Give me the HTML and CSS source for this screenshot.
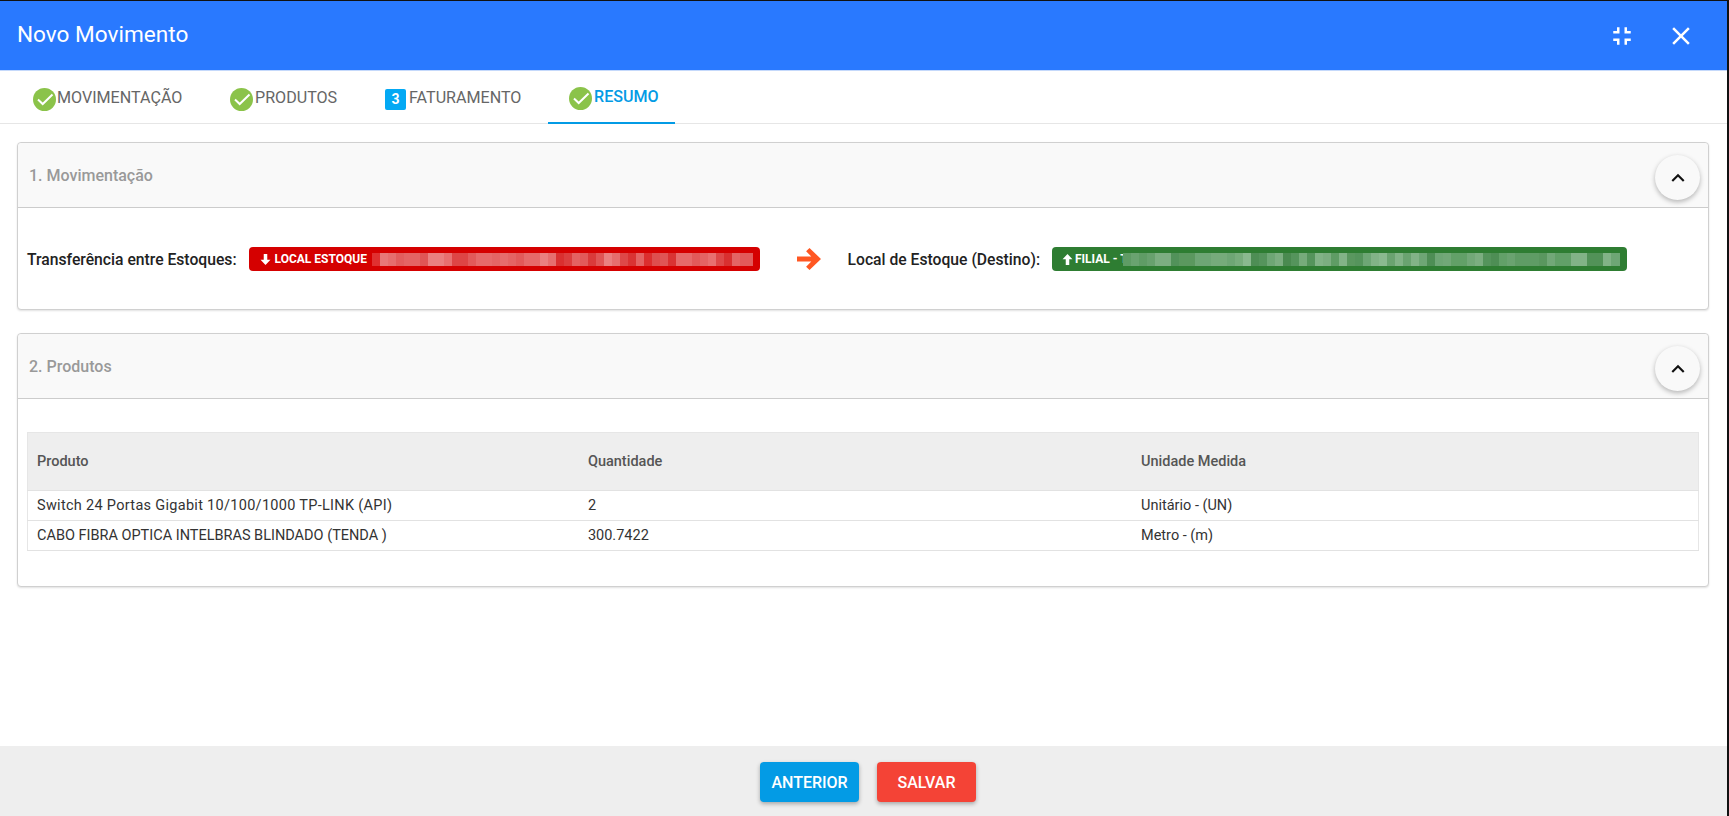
FILE: index.html
```html
<!DOCTYPE html>
<html lang="pt">
<head>
<meta charset="utf-8">
<title>Novo Movimento</title>
<link rel="stylesheet" href="styles.css">
</head>
<body>
<div class="dialog">
  <header class="topbar">
    <h1 class="title">Novo Movimento</h1>
    <div class="top-actions">
      <svg class="icon-top" viewBox="0 0 24 24"><path d="M5 16h3v3h2v-5H5v2zm3-8H5v2h5V5H8v3zm6 11h2v-3h3v-2h-5v5zm2-11V5h-2v5h5V8h-3z"/></svg>
      <svg class="icon-top" viewBox="0 0 24 24"><path d="M19 6.41L17.59 5 12 10.59 6.41 5 5 6.41 10.59 12 5 17.59 6.41 19 12 13.41 17.59 19 19 17.59 13.41 12z"/></svg>
    </div>
  </header>
  <nav class="tabs">
    <div class="tab tab-mov"><svg class="check" viewBox="0 0 23 23"><circle cx="11.5" cy="11.5" r="11.5"/><path d="M5 11.500l4.700 4.500 9.800-9.500"/></svg><span>MOVIMENTAÇÃO</span></div>
    <div class="tab tab-prod"><svg class="check" viewBox="0 0 23 23"><circle cx="11.5" cy="11.5" r="11.5"/><path d="M5 11.500l4.700 4.500 9.800-9.500"/></svg><span>PRODUTOS</span></div>
    <div class="tab tab-fat"><span class="num">3</span><span>FATURAMENTO</span></div>
    <div class="tab tab-res active"><svg class="check" viewBox="0 0 23 23"><circle cx="11.5" cy="11.5" r="11.5"/><path d="M5 11.500l4.700 4.500 9.800-9.500"/></svg><span>RESUMO</span></div>
  </nav>
  <main class="content">
    <section class="card card-mov">
      <div class="card-head"><span class="head-text">1. Movimentação</span>
        <button class="round"><svg viewBox="0 0 24 24"><path d="M12 8l-6 6 1.41 1.41L12 10.83l4.59 4.58L18 14z"/></svg></button>
      </div>
      <div class="mov-body">
        <strong class="lbl">Transferência entre Estoques:</strong>
        <div class="pill pill-red">
          <svg class="pill-arrow" viewBox="0 0 10 10"><path d="M5 10L.5 5.200h2.900V0h3.200v5.200h2.900z"/></svg>
          <span class="pill-text">LOCAL ESTOQUE</span>
          <div class="mosaic m-red"></div>
        </div>
        <svg class="big-arrow" viewBox="0 0 24 22"><path d="M12.5 0l11.5 11-11.5 11-3.4-3.3 5.200-5.200H0V8.500h14.300L9.100 3.300z"/></svg>
        <strong class="lbl lbl-dest">Local de Estoque (Destino):</strong>
        <div class="pill pill-green">
          <svg class="pill-arrow" viewBox="0 0 10 10"><path d="M5 0l4.500 4.800H6.600V10H3.400V4.800H.5z"/></svg>
          <span class="pill-text">FILIAL - T</span>
          <div class="mosaic m-green"></div>
        </div>
      </div>
    </section>
    <section class="card card-prod">
      <div class="card-head"><span class="head-text">2. Produtos</span>
        <button class="round"><svg viewBox="0 0 24 24"><path d="M12 8l-6 6 1.41 1.41L12 10.83l4.59 4.58L18 14z"/></svg></button>
      </div>
      <div class="prod-body">
        <table class="grid">
          <thead><tr><th>Produto</th><th>Quantidade</th><th>Unidade Medida</th></tr></thead>
          <tbody>
            <tr><td class="wide">Switch 24 Portas Gigabit 10/100/1000 TP-LINK (API)</td><td>2</td><td>Unitário - (UN)</td></tr>
            <tr><td>CABO FIBRA OPTICA INTELBRAS BLINDADO (TENDA )</td><td>300.7422</td><td>Metro - (m)</td></tr>
          </tbody>
        </table>
      </div>
    </section>
  </main>
  <footer class="foot">
    <button class="btn btn-blue">ANTERIOR</button>
    <button class="btn btn-red">SALVAR</button>
  </footer>
</div>
</body>
</html>
```
FILE: styles.css
```css
* { box-sizing: border-box; }
html, body { margin: 0; height: 100%; overflow: hidden; }
body { background: #111; font-family: Roboto, "Liberation Sans", sans-serif; color: #222; }
.dialog { display: flex; flex-direction: column; height: 815px; margin: 1px 2px 0 0; background: #fff; }
.topbar { height: 70px; flex: none; background: #2979ff; color: #fff; display: flex; align-items: center; justify-content: space-between; padding: 0 31px 0 17px; border-bottom: 1px solid #c5d9fb; }
.title { margin: 0 0 2px; font-size: 22.6px; font-weight: 400; }
.top-actions { display: flex; gap: 29px; }
.icon-top { width: 30px; height: 30px; fill: #fff; display: block; }
.tabs { height: 53px; flex: none; display: flex; border-bottom: 1px solid #e6e6e6; }
.tab { display: flex; align-items: center; height: 53px; font-size: 16.1px; color: #666; }
.tab-mov { margin-left: 33px; width: 197px; gap: 1px; }
.tab-prod { width: 155px; gap: 2px; }
.tab-fat { width: 163px; gap: 3px; }
.tab-res { width: 127px; padding-left: 21px; gap: 2px; color: #039be5; border-bottom: 2px solid #039be5; font-weight: 500; }
.check { width: 23px; height: 23px; flex: none; margin-top: 3px; }
.check circle { fill: #8bc34a; }
.check path { fill: none; stroke: #fff; stroke-width: 2; }
.num { width: 21px; height: 21px; margin-top: 3px; border-radius: 2px; background: #03a9f4; color: #fff; font-size: 14px; font-weight: 700; display: flex; align-items: center; justify-content: center; }
.content { flex: 1; padding: 18px 18px 0 17px; display: flex; flex-direction: column; gap: 23px; }
.card { border: 1px solid #d0d0d0; border-radius: 4px; box-shadow: 0 1px 2px rgba(0,0,0,.12); background: #fff; }
.card-mov { height: 168px; }
.card-prod { height: 254px; }
.card-head { height: 65px; background: #f9f9f9; border-bottom: 1px solid #ccc; border-radius: 4px 4px 0 0; display: flex; align-items: center; justify-content: space-between; padding: 0 8px 0 11px; font-size: 16px; font-weight: 500; color: #999; }
.head-text { padding-top: 1px; }
.round { width: 45px; height: 45px; border: 0; border-radius: 50%; background: #f9f9f9; padding: 0; margin-top: 5px; box-shadow: 0 2px 5px rgba(0,0,0,.28); display: flex; align-items: center; justify-content: center; }
.round svg { width: 26px; height: 26px; fill: #111; }
.mov-body { display: flex; align-items: center; padding: 39px 0 0 9px; }
.lbl { font-size: 15.7px; font-weight: 500; color: #222; white-space: nowrap; }
.pill { height: 24px; border-radius: 4px; display: flex; align-items: center; color: #fff; font-size: 12px; font-weight: 700; padding: 0 7px 0 11px; flex: none; }
.pill-red { width: 511px; margin-left: 12px; background: #d50000; }
.pill-green { width: 575px; margin-left: 12px; background: #2e7d32; padding-left: 10px; }
.pill-arrow { width: 11px; height: 11px; fill: #fff; flex: none; }
.pill-text { margin-left: 4px; white-space: nowrap; min-width: 0; }
.pill-green .pill-text { margin-left: 2px; }
.mosaic { height: 13px; margin-left: auto; flex: none; position: relative; }
.m-red { width: 381px; background: linear-gradient(90deg, #e03030 0 8px, #e87878 8px 16px, #e66e6e 16px 24px, #e25d5d 24px 32px, #e46464 32px 48px, #e05555 48px 56px, #ea8080 56px 72px, #e87070 72px 80px, #de4545 80px 96px, #e25a5a 96px 104px, #e66a6a 104px 120px, #e46464 120px 128px, #e66c6c 128px 136px, #e46464 136px 144px, #e25a5a 144px 152px, #e66a6a 152px 168px, #ea8080 168px 176px, #e66e6e 176px 184px, #da3030 184px 192px, #dc3e3e 192px 200px, #e46262 200px 208px, #e25a5a 208px 216px, #da3a3a 216px 224px, #e05555 224px 232px, #ea8080 232px 240px, #e66e6e 240px 248px, #de4848 248px 256px, #da3333 256px 264px, #e46262 264px 272px, #dc2e2e 272px 280px, #de4e4e 280px 288px, #e05555 288px 296px, #da3333 296px 304px, #e66a6a 304px 320px, #e25a5a 320px 328px, #e46464 328px 336px, #e87070 336px 344px, #de4848 344px 352px, #d93030 352px 360px, #e46464 360px 368px, #e25a5a 368px 381px); }
.m-green { width: 497px; background: linear-gradient(90deg, #5f9c65 0 8px, #6aa370 8px 16px, #5f9c65 16px 24px, #68a16e 24px 32px, #7cae81 32px 48px, #52925a 48px 56px, #5b985f 56px 72px, #6ea675 72px 88px, #76ab7b 88px 104px, #6ea675 104px 112px, #78ad7d 112px 120px, #8ab98f 120px 128px, #4e8e55 128px 136px, #55945c 136px 144px, #6ea675 144px 152px, #7cae81 152px 160px, #4a8a50 160px 168px, #55945c 168px 176px, #76ab7b 176px 184px, #55945c 184px 192px, #82b387 192px 200px, #7cae81 200px 208px, #5f9c65 208px 216px, #82b387 216px 224px, #5a975f 224px 232px, #55945c 232px 240px, #6ea675 240px 248px, #82b387 248px 256px, #8ab98f 256px 264px, #6aa370 264px 272px, #82b387 272px 280px, #6aa370 280px 288px, #82b387 288px 296px, #6ea675 296px 304px, #4e8e55 304px 312px, #6ea675 312px 320px, #72a878 320px 328px, #62a068 328px 344px, #72a878 344px 352px, #7cae81 352px 360px, #55945c 360px 368px, #4e8e55 368px 376px, #62a068 376px 384px, #6aa370 384px 392px, #5f9c65 392px 416px, #5a975f 416px 424px, #72a878 424px 432px, #62a068 432px 448px, #82b387 448px 464px, #529258 464px 480px, #82b387 480px 488px, #6ea675 488px 497px); }
.big-arrow { width: 24px; height: 22px; fill: #ff5722; flex: none; margin-left: 37px; }
.lbl-dest { margin-left: 27px; }
.prod-body { padding: 33px 9px 0 9px; }
.grid { width: 100%; border-collapse: collapse; font-size: 14.5px; table-layout: fixed; border: 1px solid #e6e6e6; }
.grid th, .grid td { text-align: left; padding: 0 9px 1px; border-bottom: 1px solid #e2e2e2; }
.grid th:first-child { width: 33%; }
.grid th:nth-child(2) { width: 33.1%; }
.grid th { height: 58px; background: #eee; color: #555; font-weight: 500; padding-bottom: 0; }
.grid td { height: 30px; color: #333; }
.grid .wide { letter-spacing: .3px; }
.foot { height: 70px; flex: none; background: #eee; display: flex; align-items: center; justify-content: center; gap: 18px; padding: 2px 0 0 9px; }
.btn { width: 99px; height: 40px; border: 0; border-radius: 4px; color: #fff; font: 500 16px Roboto, "Liberation Sans", sans-serif; box-shadow: 0 2px 4px rgba(0,0,0,.3); }
.btn-blue { background: #039be5; }
.btn-red { background: #f44336; }
```
